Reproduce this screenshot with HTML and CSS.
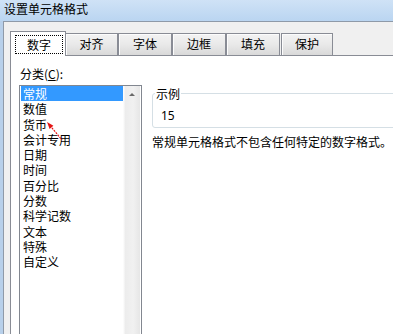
FILE: index.html
```html
<html>

<head>
    <meta charset="utf-8">
    <link rel="stylesheet" href="styles.css">
</head>

<body>
    <div class="window">
        <div class="titlebar">设置单元格格式</div>
        <div class="frame">
            <div class="client">
                <div class="tabs">
                    <div class="tab active"><span class="focus">数字</span></div>
                    <div class="tab first">对齐</div>
                    <div class="tab">字体</div>
                    <div class="tab">边框</div>
                    <div class="tab">填充</div>
                    <div class="tab last">保护</div>
                </div>
                <div class="panel">
                    <div class="left">
                        <div class="label">分类(<u>C</u>):</div>
                        <div class="listbox">
                            <ul class="items">
                                <li class="selected">常规</li>
                                <li>数值</li>
                                <li>货币</li>
                                <li>会计专用</li>
                                <li>日期</li>
                                <li>时间</li>
                                <li>百分比</li>
                                <li>分数</li>
                                <li>科学记数</li>
                                <li>文本</li>
                                <li>特殊</li>
                                <li>自定义</li>
                            </ul>
                            <div class="scrollbar"><span class="arrow"></span></div>
                        </div>
                    </div>
                    <div class="right">
                        <fieldset class="sample">
                            <legend>示例</legend>
                            <div class="value">15</div>
                        </fieldset>
                        <p class="desc">常规单元格格式不包含任何特定的数字格式。</p>
                    </div>
                </div>
            </div>
        </div>
        <svg class="pointer" width="22" height="26" viewBox="0 0 22 26">
            <line x1="6" y1="7.5" x2="18" y2="22" stroke="#e41414" stroke-width="1.2" stroke-dasharray="2 1"></line>
            <polygon points="3,4 9.4,7.8 5.6,11" fill="#e41414"></polygon>
        </svg>
    </div>
</body>

</html>
```

FILE: styles.css
```css
body {
    margin: 0;
    width: 393px;
    height: 334px;
    overflow: hidden;
    background: #f0f0f0;
    font-family: "Noto Sans CJK SC", "Noto Sans", sans-serif;
    font-size: 12px;
    color: #000;
}
.window {
    position: relative;
    width: 393px;
    height: 334px;
    overflow: hidden;
}
.titlebar {
    height: 21px;
    line-height: 18px;
    padding-left: 4px;
    background: linear-gradient(180deg, #cfe2f6, #bad5f1);
    white-space: nowrap;
}
.frame {
    display: flex;
    height: 313px;
    border-left: 3px solid #b8d0ea;
}
.client {
    flex: 1;
    border-top: 1px solid #8f9aa8;
    border-left: 1px solid #8f9aa8;
    padding: 9px 0 0 6px;
    background: #f0f0f0;
}
.tabs {
    display: flex;
    align-items: flex-end;
    height: 24px;
}
.tab {
    box-sizing: border-box;
    width: 54px;
    height: 22px;
    line-height: 20px;
    text-align: center;
    border: 1px solid #898c95;
    border-bottom: 0;
    background: linear-gradient(180deg, #f3f3f3, #e9e9e9 50%, #d9d9d9);
    box-shadow: inset 1px 1px 0 #fcfcfc;
}
.tab.first {
    width: 53px;
    margin-left: -1px;
}
.tab.last {
    width: 52px;
    margin-left: 1px;
}
.tab.active {
    position: relative;
    z-index: 1;
    width: 56px;
    height: 25px;
    margin-bottom: -1px;
    background: #fff;
    box-shadow: none;
    padding: 3px 2px 2px 4px;
    line-height: 17px;
}
.focus {
    display: block;
    box-sizing: border-box;
    height: 19px;
    border: 1px dotted #000;
}
.panel {
    display: flex;
    height: 300px;
    background: #fff;
    border-top: 1px solid #898c95;
    border-left: 1px solid #898c95;
    padding-left: 8px;
}
.left {
    padding-top: 10px;
}
.label {
    line-height: 15px;
    margin-left: 1px;
    margin-bottom: 4px;
}
.listbox {
    display: flex;
    width: 120px;
    height: 260px;
    border: 1px solid #828790;
    padding-left: 1px;
    box-sizing: content-box;
}
.items {
    list-style: none;
    margin: 0;
    padding: 0;
    width: 102px;
}
.items li {
    line-height: 15.3px;
    height: 15.3px;
    padding-left: 2px;
    white-space: nowrap;
}
.items li.selected {
    background: #3399ff;
    color: #fff;
}
.scrollbar {
    width: 17px;
    background: linear-gradient(90deg, #fbfbfb 0, #fbfbfb 1px, #ececec 2px, #f1f1f1 60%, #e6e6e6);
    display: flex;
    justify-content: center;
    padding-top: 7px;
    box-sizing: border-box;
}
.arrow {
    width: 0;
    height: 0;
    border-left: 3px solid transparent;
    border-right: 3px solid transparent;
    border-bottom: 3px solid #6a6a6a;
}
.right {
    margin-left: 10px;
    padding-top: 30px;
    width: 300px;
    flex: none;
}
.sample {
    margin: 0;
    padding: 7px 0 4px 8px;
    border: 1px solid #d5dfe5;
    border-radius: 3px;
}
.sample legend {
    line-height: 15px;
    padding: 0 1px;
    margin-left: -6px;
}
.value {
    font-family: "Noto Sans", sans-serif;
    line-height: 15px;
}
.desc {
    margin: 6px 0 0 0;
    line-height: 15px;
    white-space: nowrap;
}
.pointer {
    position: absolute;
    left: 44px;
    top: 118px;
}
```
